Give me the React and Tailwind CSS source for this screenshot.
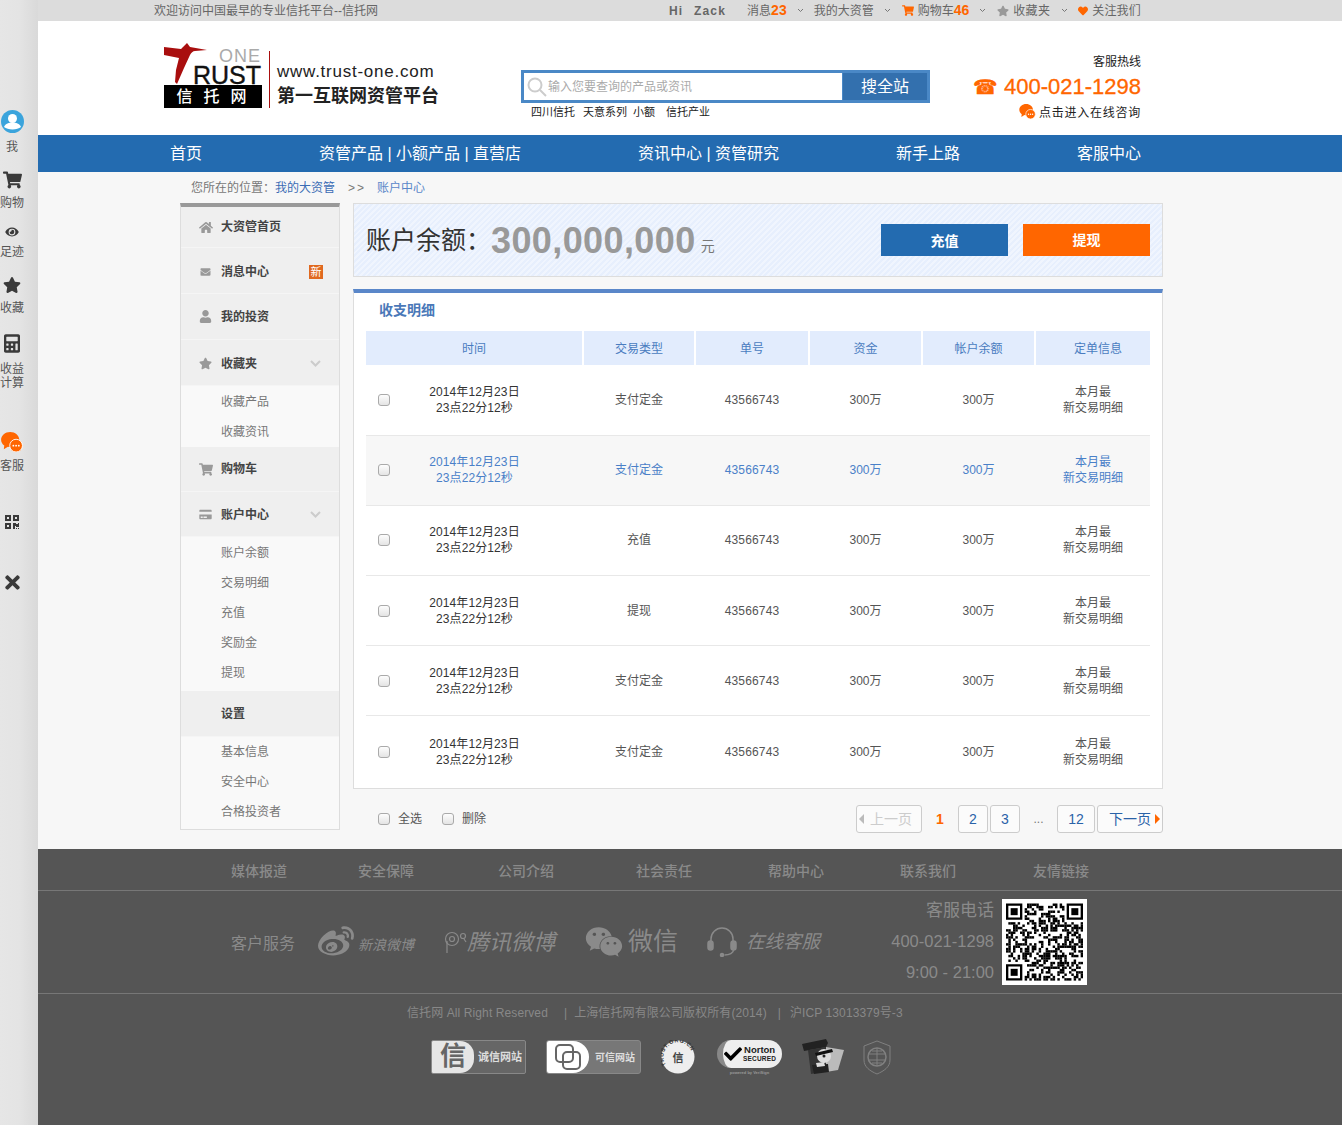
import React from 'react';
import {
  FaHome, FaEnvelope, FaUser, FaStar, FaShoppingCart, FaCreditCard, FaEye, FaCalculator,
  FaQrcode, FaTimes, FaHeart, FaWeibo, FaWeixin, FaCheck,
} from 'react-icons/fa';

const rows = [
  { type: '支付定金', box: 'h-[71px] pb-[1px]' },
  { type: '支付定金', box: 'h-[70px] pb-[2px]', active: true },
  { type: '充值', box: 'h-[70px] pb-[2px]' },
  { type: '提现', box: 'h-[70px]' },
  { type: '支付定金', box: 'h-[70px]' },
  { type: '支付定金', box: 'h-[70px] pt-[2px]' },
];

const footerLinks = [
  ['媒体报道', 'ml-0'], ['安全保障', 'ml-[71px]'], ['公司介绍', 'ml-[84px]'], ['社会责任', 'ml-[82px]'],
  ['帮助中心', 'ml-[76px]'], ['联系我们', 'ml-[76px]'], ['友情链接', 'ml-[77px]'],
];

const Caret = () => (
  <svg className="w-[7px] h-[5px] text-[#777]" viewBox="0 0 7 5" fill="none" stroke="currentColor">
    <path d="M1 1l2.500 2.500L6 1" />
  </svg>
);

const Chat = ({ className }) => (
  <svg className={className} viewBox="0 0 24 22">
    <path d="M10 0C4.500 0 0 3.800 0 8.500c0 2.600 1.400 4.900 3.500 6.400L3 19l4.500-2.800c1 .2 1.800.3 2.500.3 5.500 0 10-3.300 10-8S15.500 0 10 0z" fill="#ff6600" />
    <circle cx="16.500" cy="15" r="7" fill="#ff6600" stroke="#fff" strokeWidth="1" />
    <circle cx="13.500" cy="15" r="1" fill="#fff" />
    <circle cx="16.500" cy="15" r="1" fill="#fff" />
    <circle cx="19.500" cy="15" r="1" fill="#fff" />
  </svg>
);

const RailItem = ({ className, icon, children }) => (
  <div className={`flex flex-col items-center text-[12px] leading-[14px] text-[#555] whitespace-nowrap ${className}`}>
    {icon}
    {children && <span className="mt-[7px] text-center">{children}</span>}
  </div>
);

const Rail = () => (
  <div className="w-[38px] shrink-0 bg-gradient-to-r from-[#e6e6e6] via-[#e4e4e4] to-[#d9d9d9]">
    <div className="w-[24px] pt-[110px] flex flex-col items-center">
      <RailItem icon={
        <svg className="w-[23px] h-[23px]" viewBox="0 0 23 23">
          <circle cx="11.500" cy="11.500" r="11.500" fill="#3ba4dc" />
          <circle cx="11.500" cy="8.500" r="4.500" fill="#fff" />
          <path d="M3 17c1.500-3.500 5-4.500 8.500-4.500S18.500 13.500 20 17c-2 1.500-5 2.500-8.500 2.500S5 18.500 3 17z" fill="#fff" />
        </svg>
      }>我</RailItem>
      <RailItem className="mt-[17px]" icon={<FaShoppingCart className="w-[19px] h-[18px] text-[#3a3a3a]" />}>购物</RailItem>
      <RailItem className="mt-[16px]" icon={<FaEye className="w-[14px] h-[12px] text-[#3a3a3a]" />}>足迹</RailItem>
      <RailItem className="mt-[17px]" icon={<FaStar className="w-[18px] h-[18px] text-[#3a3a3a]" />}>收藏</RailItem>
      <RailItem className="mt-[17px]" icon={<FaCalculator className="w-[16px] h-[23px] text-[#3a3a3a]" />}>收益<br />计算</RailItem>
      <RailItem className="mt-[42px]" icon={<Chat className="w-[24px] h-[20px]" />}>客服</RailItem>
      <RailItem className="mt-[41px]" icon={<FaQrcode className="w-[16px] h-[16px] text-[#3a3a3a]" />} />
      <RailItem className="mt-[42px]" icon={<FaTimes className="w-[21px] h-[21px] text-[#3a3a3a]" />} />
    </div>
  </div>
);

const TopBar = () => (
  <div className="h-[21px] bg-[#dcdcdc] flex items-center text-[12px] text-[#666] pl-[116px] pr-[201px]">
    <span>欢迎访问中国最早的专业信托平台--信托网</span>
    <div className="ml-auto flex items-center whitespace-nowrap">
      <span className="font-bold tracking-[1.200px] [word-spacing:6px]">Hi Zack</span>
      <span className="ml-[21px]">消息<b className="text-[14px] leading-[14px] text-[#ff6600]">23</b></span>
      <span className="ml-[10px]"><Caret /></span>
      <span className="ml-[10px]">我的大资管</span>
      <span className="ml-[10px]"><Caret /></span>
      <FaShoppingCart className="ml-[11px] w-[12px] h-[11px] text-[#ff6600]" />
      <span className="ml-[4px]">购物车<b className="text-[14px] leading-[14px] text-[#ff6600]">46</b></span>
      <span className="ml-[10px]"><Caret /></span>
      <FaStar className="ml-[11px] w-[12px] h-[12px] text-[#999]" />
      <span className="ml-[4px] tracking-[0.300px]">收藏夹</span>
      <span className="ml-[11px]"><Caret /></span>
      <FaHeart className="ml-[10px] w-[10px] h-[10px] text-[#ff6600]" />
      <span className="ml-[4px] tracking-[0.200px]">关注我们</span>
    </div>
  </div>
);

const Logo = () => (
  <div className="relative w-[98px] h-[65px] shrink-0">
    <svg className="absolute left-0 top-0 w-[46px] h-[42px]" viewBox="0 0 46 42">
      <path d="M0 4l17 2 6-6 3 4 17 3-12 1c-2 0-4 2-5 4l-6 13-7 16-2-2 1-12 3-12-15-3z" fill="#a90e0e" />
    </svg>
    <span className="absolute right-[1px] top-[6px] text-[18px] leading-[15px] tracking-[1px] text-[#aaa]">ONE</span>
    <span className="absolute right-[1px] top-[22px] text-[25px] leading-[20px] text-[#111] [-webkit-text-stroke:0.4px_#111]">RUST</span>
    <div className="absolute left-0 bottom-0 w-full h-[23px] bg-black text-white text-[16px] leading-[23px] text-center tracking-[11px] pl-[8px] font-medium">信托网</div>
  </div>
);

const Header = () => (
  <div className="h-[114px] bg-white flex pl-[126px] pr-[201px]">
    <div className="pt-[22px] flex">
      <Logo />
      <div className="ml-[7px] mt-[8px] w-[1px] h-[57px] bg-[#a90e0e]" />
      <div className="ml-[7px] mt-[18px] text-[#222]">
        <div className="text-[17px] leading-[22px] tracking-[0.750px] whitespace-nowrap">www.trust-one.com</div>
        <div className="text-[18px] leading-[26px] font-bold whitespace-nowrap">第一互联网资管平台</div>
      </div>
    </div>
    <div className="ml-[82px] pt-[49px]">
      <div className="w-[409px] h-[33px] border-[3px] border-[#4a88c6] flex bg-white">
        <div className="flex-1 flex items-center pl-[3px]">
          <svg className="w-[20px] h-[20px] text-[#ccc]" viewBox="0 0 20 20" fill="none" stroke="currentColor" strokeWidth="2">
            <circle cx="8" cy="8" r="6.500" />
            <path d="M13 13l6 6" />
          </svg>
          <span className="ml-[1px] pt-[1px] text-[12px] text-[#aaa]">输入您要查询的产品或资讯</span>
        </div>
        <div className="w-[85px] border-l-[1px] border-[#4a88c6] bg-[#3370ae] text-white text-[16px] leading-[27px] text-center">搜全站</div>
      </div>
      <div className="mt-[1px] pl-[10px] text-[11px] leading-[16px] text-[#222] whitespace-nowrap">
        <span>四川信托</span>
        <span className="ml-[8px]">天意系列</span>
        <span className="ml-[6px]">小额</span>
        <span className="ml-[11px]">信托产业</span>
      </div>
    </div>
    <div className="ml-auto pt-[34px] flex flex-col items-end">
      <div className="text-[12px] leading-[14px] text-[#222]">客服热线</div>
      <div className="mt-[4px] flex items-center text-[#ff6600] text-[22px] leading-[28px] [-webkit-text-stroke:0.3px_#ff6600]">
        <span className="mr-[6px] text-[20px] leading-[28px] [font-family:'DejaVu_Sans',sans-serif]">☎</span>
        400-021-1298
      </div>
      <div className="mt-[4px] flex items-center text-[12px] leading-[16px] text-[#222] tracking-[0.750px]">
        <Chat className="w-[17px] h-[15px] mr-[3px] -mt-[4px]" />
        点击进入在线咨询
      </div>
    </div>
  </div>
);

const Nav = () => (
  <div className="h-[37px] bg-[#236bb0] flex items-center justify-between pl-[132px] pr-[201px] text-white text-[16px] whitespace-nowrap">
    <span>首页</span>
    <span>资管产品 | 小额产品 | 直营店</span>
    <span>资讯中心 | 资管研究</span>
    <span>新手上路</span>
    <span>客服中心</span>
  </div>
);

const SideHead = ({ icon, children, box = 'h-[46px]', arrow, badge }) => (
  <div className={`${box} bg-[#efefef] border-b border-[#f5f5f5] flex items-center pl-[18px] text-[12px] font-bold text-[#444] ${badge ? 'pr-[16px]' : 'pr-[18px]'}`}>
    <span className="w-[22px] flex text-[#999]">{icon}</span>
    <span>{children}</span>
    {arrow && (
      <svg className="ml-auto w-[11px] h-[7px] text-[#ccc]" viewBox="0 0 11 7" fill="none" stroke="currentColor" strokeWidth="2">
        <path d="M1 1l4.500 4.500L10 1" />
      </svg>
    )}
    {badge && <span className="ml-auto w-[14px] h-[14px] bg-[#e0691f] text-white text-[11px] leading-[14px] text-center font-normal">新</span>}
  </div>
);

const SideSub = ({ items, className = '' }) => (
  <div className={`bg-[#f9f9f9] pl-[40px] text-[12px] text-[#777] ${className}`}>
    {items.map((t) => (
      <div key={t} className="h-[30px] flex items-center">{t}</div>
    ))}
  </div>
);

const Sidebar = () => (
  <div className="w-[160px] h-[627px] shrink-0 border-x border-b border-[#ddd] border-t-[4px] border-t-[#999] bg-[#f9f9f9]">
    <SideHead box="h-[41px]" icon={<FaHome className="w-[14px] h-[13px]" />}>大资管首页</SideHead>
    <SideHead box="h-[46px] pt-[3px]" icon={<FaEnvelope className="w-[13px] h-[10px]" />} badge>消息中心</SideHead>
    <SideHead icon={<FaUser className="w-[13px] h-[13px]" />}>我的投资</SideHead>
    <SideHead box="h-[46px] pt-[2px]" icon={<FaStar className="w-[13px] h-[13px]" />} arrow>收藏夹</SideHead>
    <SideSub items={['收藏产品', '收藏资讯']} className="pt-[1px]" />
    <SideHead box="h-[45px]" icon={<FaShoppingCart className="w-[14px] h-[13px]" />}>购物车</SideHead>
    <SideHead box="h-[45px] pt-[1px]" icon={<FaCreditCard className="w-[13px] h-[11px]" />} arrow>账户中心</SideHead>
    <SideSub items={['账户余额', '交易明细', '充值', '奖励金', '提现']} className="pt-[1px] pb-[3px]" />
    <SideHead icon={null}>设置</SideHead>
    <SideSub items={['基本信息', '安全中心', '合格投资者']} />
  </div>
);

const Balance = () => (
  <div className="h-[74px] border border-[#ddd] flex items-center px-[12px] bg-[repeating-linear-gradient(135deg,#e7effd_0,#e7effd_2px,#f0f5fe_2px,#f0f5fe_4px)]">
    <span className="pt-[1px] text-[25px] text-[#333] whitespace-nowrap">账户余额：</span>
    <b className="pt-[1px] text-[36px] leading-[40px] text-[#999] tracking-[0.400px]">300,000,000</b>
    <span className="ml-[5px] mt-[12px] text-[14px] text-[#777]">元</span>
    <div className="ml-auto flex gap-[15px] text-white text-[14px] font-bold">
      <div className="w-[127px] h-[32px] bg-[#236bb0] leading-[34px] text-center">充值</div>
      <div className="w-[127px] h-[32px] bg-[#ff6600] leading-[32px] text-center">提现</div>
    </div>
  </div>
);

const Check = () => (
  <span className="block w-[12px] h-[12px] shrink-0 border border-[#aaa] rounded-[3px] bg-gradient-to-b from-[#fdfdfd] to-[#e4e4e4]" />
);

const gridCols = 'grid grid-cols-[216px_110px_112px_111px_111px_114px] gap-x-[2px]';

const Table = () => (
  <div className="mt-[12px] h-[500px] bg-white border-x border-b border-[#ddd] border-t-[4px] border-t-[#5a87c9] px-[12px]">
    <div className="h-[38px] flex items-center pl-[13px] pb-[4px] text-[14px] font-bold text-[#4a78b8]">收支明细</div>
    <div className={`${gridCols} text-[12px] text-[#4a7cc0] text-center`}>
      {['时间', '交易类型', '单号', '资金', '帐户余额'].map((t) => (
        <div key={t} className="h-[34px] bg-[#e2ecfd] leading-[37px]">{t}</div>
      ))}
      <div className="h-[34px] bg-[#e2ecfd] leading-[37px] pl-[10px]">定单信息</div>
    </div>
    {rows.map((r, i) => (
      <div
        key={i}
        className={`${gridCols} ${r.box} items-center text-center text-[12px] leading-[16px] ${i < 5 ? 'border-b border-[#e8e8e8]' : ''} ${r.active ? 'bg-[#f7f7f7] text-[#4a80c8]' : 'text-[#555]'}`}
      >
        <div className="flex items-center pl-[12px]">
          <Check />
          <div className={`flex-1 pr-[23px] tracking-[0.100px] ${r.active ? '' : 'text-[#333]'}`}>2014年12月23日<br />23点22分12秒</div>
        </div>
        <div>{r.type}</div>
        <div className="tracking-[0.150px]">43566743</div>
        <div>300万</div>
        <div>300万</div>
        <div>本月最<br />新交易明细</div>
      </div>
    ))}
  </div>
);

const PageBtn = ({ className = '', children }) => (
  <div className={`h-[28px] border border-[#ccc] rounded-[3px] flex items-center text-[14px] bg-[#fbfbfb] ${className}`}>{children}</div>
);

const Pager = () => (
  <div className="mt-[16px] flex items-center pl-[25px] text-[12px] text-[#555]">
    <Check />
    <span className="ml-[8px]">全选</span>
    <span className="ml-[20px]"><Check /></span>
    <span className="ml-[8px]">删除</span>
    <div className="ml-auto flex items-center text-[#2a62a8]">
      <PageBtn className="w-[66px] pl-[2px] text-[#ccc]">
        <span className="mr-[6px] w-0 h-0 border-y-[5px] border-y-transparent border-r-[5px] border-r-[#bbb]" />
        上一页
      </PageBtn>
      <b className="w-[36px] text-center text-[14px] text-[#ff6600]">1</b>
      <PageBtn className="w-[30px] justify-center">2</PageBtn>
      <PageBtn className="w-[30px] ml-[2px] justify-center">3</PageBtn>
      <span className="w-[37px] text-center text-[#777]">...</span>
      <PageBtn className="w-[38px] justify-center">12</PageBtn>
      <PageBtn className="w-[66px] ml-[2px] pl-[11px]">
        下一页
        <span className="ml-[4px] w-0 h-0 border-y-[5px] border-y-transparent border-l-[5px] border-l-[#ff6600]" />
      </PageBtn>
    </div>
  </div>
);

const Body = () => (
  <div className="h-[677px] bg-[#f7f7f7]">
    <div className="h-[31px] flex items-center pl-[153px] pt-[1px] text-[12px] text-[#777] whitespace-nowrap">
      您所在的位置：<span className="text-[#3b6cb5]">我的大资管</span>
      <span className="ml-[13px] tracking-[2px]">&gt;&gt;</span>
      <span className="ml-[11px] text-[#5a87c9]">账户中心</span>
    </div>
    <div className="flex pl-[142px] gap-[13px]">
      <Sidebar />
      <div className="w-[810px]">
        <Balance />
        <Table />
        <Pager />
      </div>
    </div>
  </div>
);

const finder = (x, y, size) => (x < 8 && y < 8) || (x >= size - 8 && y < 8) || (x < 8 && y >= size - 8);

const QrCode = () => {
  const size = 33;
  const cells = [];
  let seed = 1342;
  for (let y = 0; y < size; y++) {
    for (let x = 0; x < size; x++) {
      seed = (seed * 1103515245 + 12345) & 0x7fffffff;
      if (finder(x, y, size)) continue;
      if ((seed >> 16) % 100 < 50) cells.push(<rect key={`${x}-${y}`} x={x} y={y} width="1.050" height="1.050" />);
    }
  }
  const eye = (x, y) => (
    <g key={`${x}-${y}`}>
      <path d={`M${x} ${y}h7v7h-7z M${x + 1} ${y + 1}v5h5v-5z`} fillRule="evenodd" />
      <rect x={x + 2} y={y + 2} width="3" height="3" />
    </g>
  );
  return (
    <div className="w-[85px] h-[86px] bg-white p-[4px] shrink-0">
      <svg className="w-full h-full" viewBox="0 0 33 33" fill="#000">
        {cells}
        {eye(0, 0)}
        {eye(26, 0)}
        {eye(0, 26)}
      </svg>
    </div>
  );
};

const Badges = () => (
  <div className="mt-[18px] flex items-center pl-[393px] text-[#ddd]">
    <div className="w-[95px] h-[34px] border border-[#888] rounded-[2px] flex items-center bg-[#666] overflow-hidden">
      <div className="w-[42px] h-full bg-[#e6e6e6] rounded-r-[14px] text-[#666] text-[26px] leading-[30px] text-center font-bold">信</div>
      <span className="ml-[4px] text-[11px] font-bold whitespace-nowrap">诚信网站</span>
    </div>
    <div className="ml-[20px] w-[95px] h-[34px] border border-[#888] rounded-[3px] flex items-center bg-[#777] overflow-hidden">
      <div className="w-[42px] h-full bg-white rounded-r-[16px] flex items-center justify-center">
        <svg className="w-[26px] h-[26px] text-[#666]" viewBox="0 0 26 26" fill="none" stroke="currentColor" strokeWidth="2">
          <rect x="1" y="1" width="17" height="17" rx="4" />
          <rect x="8" y="8" width="17" height="17" rx="4" />
        </svg>
      </div>
      <span className="ml-[6px] text-[10px] font-bold whitespace-nowrap">可信网站</span>
    </div>
    <svg className="ml-[20px] w-[34px] h-[34px]" viewBox="0 0 34 34">
      <circle cx="17" cy="17" r="16.500" fill="#eee" />
      <defs>
        <path id="trust-ring" d="M5 25A14.500 14.500 0 1 1 29 25" />
      </defs>
      <text fontSize="5.500" fontWeight="bold" fill="#333" letterSpacing="0.600">
        <textPath href="#trust-ring">TRUST.ORG.CN</textPath>
      </text>
      <text x="17" y="22" fontSize="11" fontWeight="bold" fill="#444" textAnchor="middle">信</text>
    </svg>
    <div className="ml-[22px] w-[65px] flex flex-col items-center">
      <div className="w-[65px] h-[28px] rounded-full bg-[#eee] border-l-[6px] border-[#888] flex items-center text-[#222]">
        <FaCheck className="ml-[1px] w-[18px] h-[18px] text-black shrink-0" />
        <div className="ml-[1px] text-center leading-[9px]">
          <div className="text-[9.500px] font-bold">Norton</div>
          <div className="text-[6.500px] font-bold tracking-[0.200px]">SECURED</div>
        </div>
      </div>
      <span className="mt-[2px] text-[4px] leading-[5px] text-[#999] font-bold whitespace-nowrap">powered by VeriSign</span>
    </div>
    <svg className="ml-[20px] w-[42px] h-[36px]" viewBox="0 0 42 36">
      <path d="M0 5l24-5 2 4-2 4-22 4z" fill="#222" />
      <path d="M6 11l18-3 1 24-16 3z" fill="#333" />
      <path d="M24 8l18 3-6 20-12 2z" fill="#bbb" />
      <circle cx="22" cy="17" r="7" fill="#ddd" />
      <path d="M13 14l17-4 1 3-17 4z" fill="#111" />
      <circle cx="22" cy="17" r="1.500" fill="#222" />
      <path d="M10 26l16-1 1 8-15 2z" fill="#222" />
      <path d="M14 24l8-1 1 4-8 1z" fill="#ddd" />
    </svg>
    <svg className="ml-[19px] w-[28px] h-[35px] text-[#808080]" viewBox="0 0 28 35" fill="none" stroke="currentColor">
      <path d="M14 1l13 5v14c0 7-6 11-13 14C7 31 1 27 1 20V6z" />
      <circle cx="14" cy="17" r="9" strokeWidth="1.500" />
      <path d="M6 14h16M6 20h16M14 8v18M9 11h10M9 23h10" />
    </svg>
  </div>
);

const Footer = () => (
  <div className="h-[276px] bg-[#555] text-[#8a8a8a]">
    <div className="h-[42px] pt-[4px] border-b border-[#777] flex items-center pl-[193px] text-[14px] font-medium whitespace-nowrap">
      {footerLinks.map(([t, ml]) => <span key={t} className={ml}>{t}</span>)}
    </div>
    <div className="h-[103px] border-b border-[#777] flex items-center pl-[193px] whitespace-nowrap">
      <span className="mt-[3px] text-[16px]">客户服务</span>
      <FaWeibo className="ml-[21px] w-[40px] h-[36px]" />
      <span className="ml-[2px] mt-[6px] text-[14px] italic">新浪微博</span>
      <svg className="ml-[30px] w-[24px] h-[22px]" viewBox="0 0 24 22" fill="none" stroke="currentColor" strokeWidth="1.200">
        <circle cx="8" cy="8" r="6.500" />
        <circle cx="8" cy="8" r="2.500" />
        <path d="M3 10v12" />
        <circle cx="19" cy="5" r="2.500" />
        <path d="M20 8l2 3" />
      </svg>
      <span className="text-[22px] italic -ml-[1px]">腾讯微博</span>
      <FaWeixin className="ml-[30px] w-[38px] h-[34px]" />
      <span className="ml-[5px] text-[25px]">微信</span>
      <svg className="ml-[28px] w-[32px] h-[30px]" viewBox="0 0 32 30" fill="none" stroke="currentColor" strokeWidth="1.500">
        <path d="M5 15v-3a11 11 0 0 1 22 0v3" />
        <rect x="2" y="14" width="5" height="9" rx="2.500" fill="currentColor" />
        <rect x="25" y="14" width="5" height="9" rx="2.500" fill="currentColor" />
        <path d="M27.500 23c0 3-4 5-9 5" />
        <circle cx="16" cy="28" r="1.500" fill="currentColor" />
      </svg>
      <span className="ml-[8px] text-[18.500px] italic">在线客服</span>
      <div className="ml-auto flex items-center pr-[255px]">
        <div className="pb-[2px] text-right text-[16.500px] leading-[31px]">
          <div className="text-[17px]">客服电话</div>
          <div>400-021-1298</div>
          <div>9:00 - 21:00</div>
        </div>
        <span className="ml-[8px]"><QrCode /></span>
      </div>
    </div>
    <div className="pt-[11px] flex items-center pl-[369px] text-[12px] leading-[16px] tracking-[0.100px] text-[#888] whitespace-nowrap">
      <span>信托网 All Right Reserved</span>
      <span className="ml-[16px] mr-[7px]">|</span>
      <span>上海信托网有限公司版权所有(2014)</span>
      <span className="ml-[11px] mr-[9px]">|</span>
      <span>沪ICP 13013379号-3</span>
    </div>
    <Badges />
  </div>
);

export default function App() {
  return (
    <div className="flex w-[1342px] h-[1125px] overflow-hidden [font-family:'Liberation_Sans','Noto_Sans_CJK_SC',sans-serif]">
      <Rail />
      <div className="flex-1 min-w-0">
        <TopBar />
        <Header />
        <Nav />
        <Body />
        <Footer />
      </div>
    </div>
  );
}
